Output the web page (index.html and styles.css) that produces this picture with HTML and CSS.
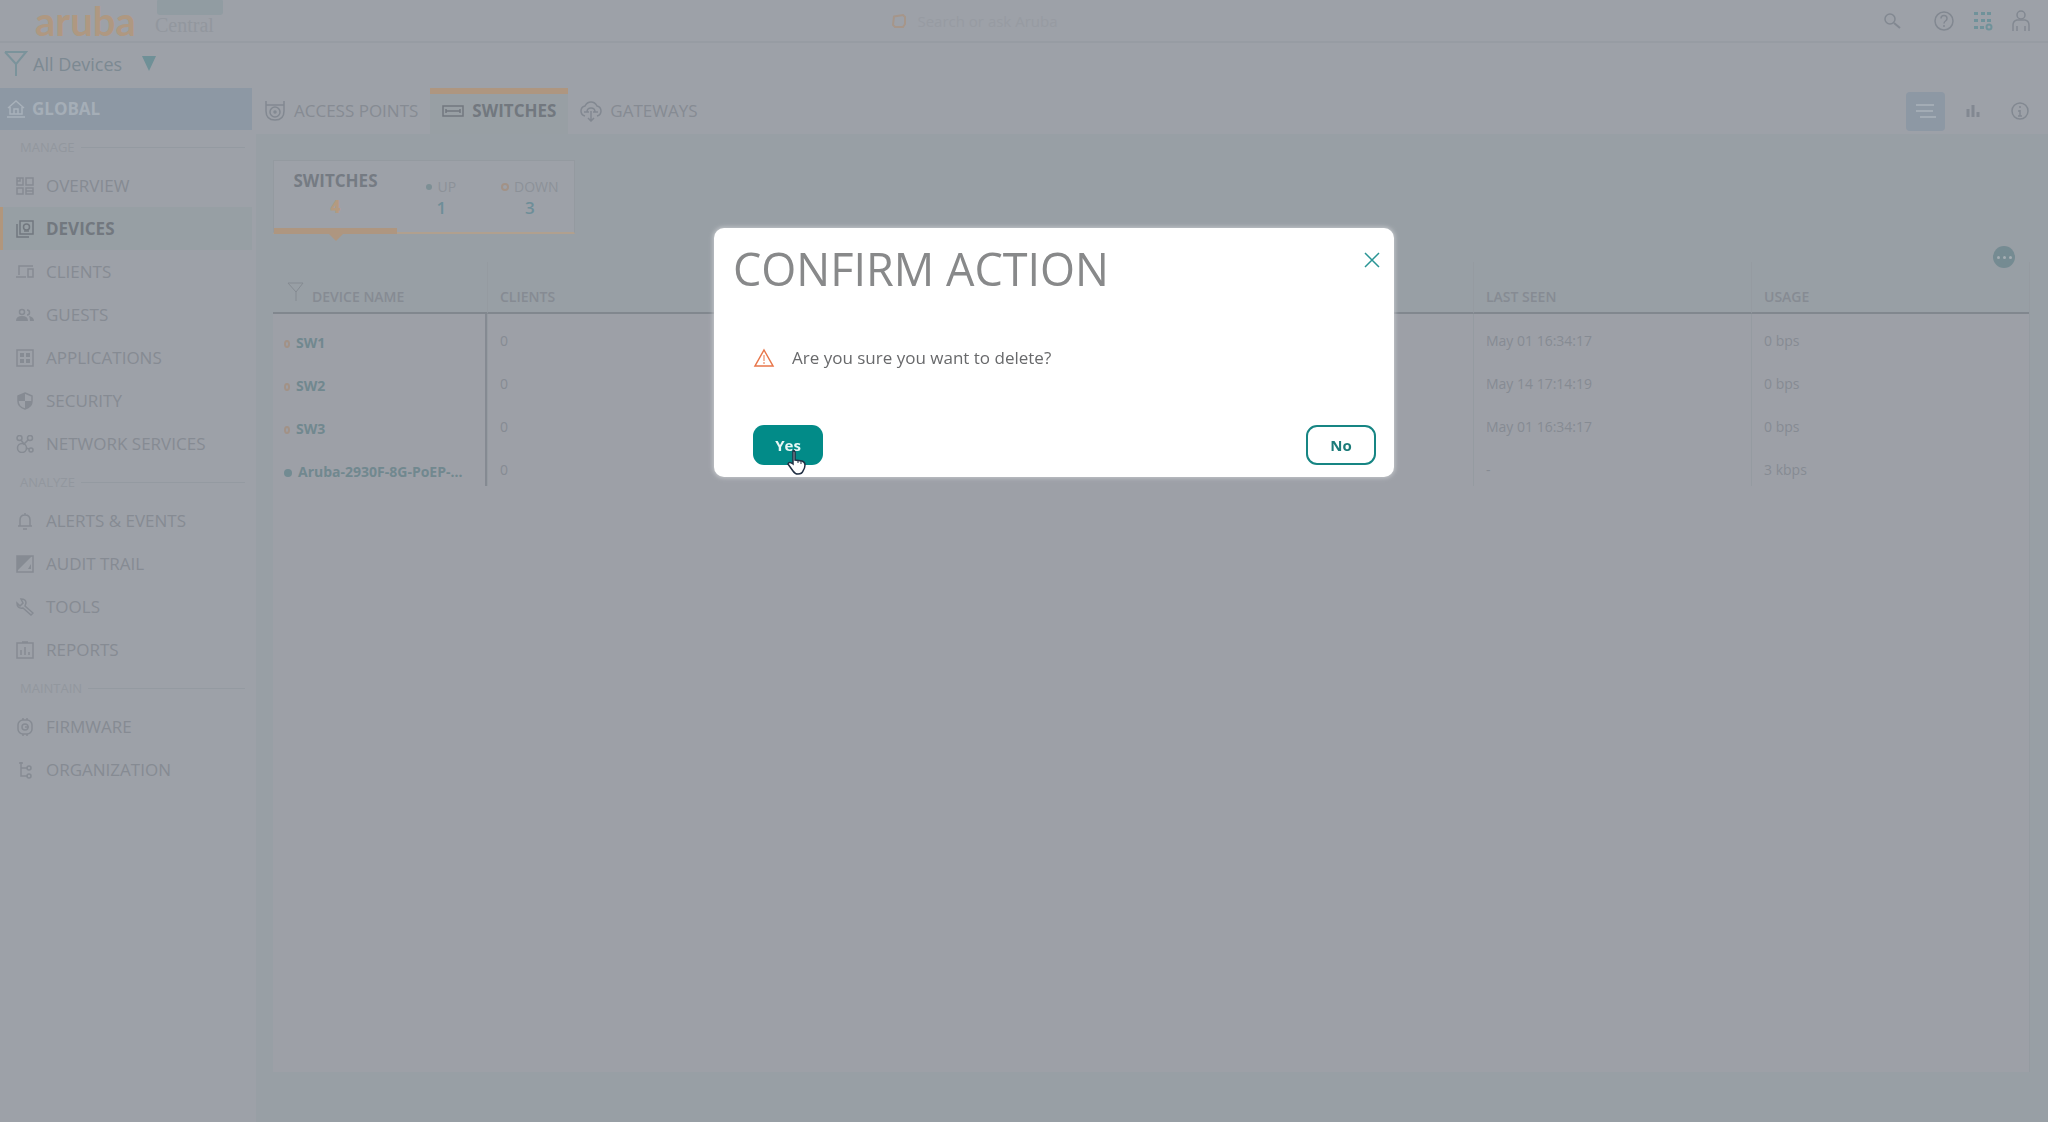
FILE: index.html
```html
<!DOCTYPE html>
<html lang="en">
<head>
<meta charset="utf-8">
<title>Aruba Central</title>
<link rel="stylesheet" href="styles.css">
</head>
<body>
<header class="topbar">
  <a class="logo" href="#">aruba</a>
  <span class="product"><i class="badge"></i>Central</span>
  <label class="search">
    <svg width="16" height="16" viewBox="0 0 16 16" aria-hidden="true"><path d="M3 3.500L12 2l2 2v7l-2 3H4l-2-2z" fill="none" stroke="#a6968a" stroke-width="2"/></svg>
    <input type="text" placeholder="Search or ask Aruba" aria-label="Search">
  </label>
  <nav class="tools">
    <button type="button" aria-label="Search"><svg width="18" height="18" viewBox="0 0 18 18"><circle cx="7" cy="7" r="5"/><path d="M11 11l6 5" stroke-width="2"/></svg></button>
    <button type="button" class="help" aria-label="Help"><svg width="22" height="22" viewBox="0 0 22 22"><circle cx="11" cy="11" r="9"/><path d="M8 8.500q0-3 3-3t3 3q0 1.500-1.500 2.500T11 13.500M11 15v2"/></svg></button>
    <button type="button" aria-label="Apps"><svg width="20" height="20" viewBox="0 0 20 20"><g fill="#70929a" stroke="none"><path d="M1 1h4v3H1zM8 1h4v3H8zM14 1h4v3h-4zM1 8h4v3H1zM8 8h4v3H8zM14 8h4v3h-4zM1 15h4v3H1zM7 15h4v3H7z"/></g><circle cx="16" cy="16" r="2.500" stroke="#70929a" stroke-width="2"/></svg></button>
    <button type="button" aria-label="Account"><svg width="20" height="22" viewBox="0 0 20 22"><circle cx="10" cy="5" r="4"/><path d="M2 21v-6q0-4 4-5h8q4 1 4 5v6M6 21v-5M14 21v-5"/></svg></button>
  </nav>
</header>

<div class="filterbar">
  <svg width="24" height="26" viewBox="0 0 24 26" aria-hidden="true"><path d="M1 1h21L12 13v12M1 1l11 12" fill="none" stroke="#7b939b" stroke-width="2"/></svg>
  <button type="button" class="scope">All Devices <i class="caret"></i></button>
</div>

<div class="shell">
  <aside class="sidebar">
    <a class="global" href="#"><svg width="18" height="20" viewBox="0 0 18 20" aria-hidden="true"><path d="M1 9l8-7 8 7M3 8v7h12V8M7 15v-5h4v5M0 18h18" fill="none" stroke="#a8b1ba" stroke-width="1.500"/></svg>GLOBAL</a>
    <h2 class="group">MANAGE</h2>
    <nav class="menu">
      <a href="#"><svg viewBox="0 0 18 18"><path d="M1 1h6v7H1zM10 1h7v7h-7zM1 11h6v6H1zM10 11h7v6h-7zM4 1v3H1M10 14h7"/></svg>OVERVIEW</a>
      <a href="#" class="on"><svg viewBox="0 0 18 18"><path d="M4 1h13v13H4zM1 4v13h12"/><circle cx="10.500" cy="7" r="3"/><path d="M8 11h5"/></svg>DEVICES</a>
      <a href="#"><svg viewBox="0 0 18 18"><path d="M17 3H3v9M0 14h10M12 6h5v8h-5z" /></svg>CLIENTS</a>
      <a href="#"><svg viewBox="0 0 18 18"><circle cx="6" cy="6" r="2.500"/><path d="M11 4a2.500 2.500 0 0 1 0 5"/><path class="solid" d="M0 15q0-5 6-5t6 5zM13 10q5 1 5 5h-4q0-3-1-5z"/></svg>GUESTS</a>
      <a href="#"><svg viewBox="0 0 18 18"><path d="M1 1h16v16H1z"/><path class="solid" d="M4 4h4v4H4zM10 4h4v4h-4zM4 10h4v4H4zM10 10h4v4h-4z"/></svg>APPLICATIONS</a>
      <a href="#"><svg viewBox="0 0 18 18"><path d="M9 1l7 3v5q0 6-7 8-7-2-7-8V4z"/><path class="solid" d="M9 1v8H2V4zM9 9h7q0 6-7 8z"/></svg>SECURITY</a>
      <a href="#"><svg viewBox="0 0 18 18"><circle cx="3.500" cy="3" r="2.500"/><circle cx="14" cy="3" r="2.500"/><circle cx="6" cy="13" r="4.500"/><circle cx="15" cy="15" r="2"/><path d="M5 5l3 4 4-4M10 13l3 1"/></svg>NETWORK SERVICES</a>
    </nav>
    <h2 class="group">ANALYZE</h2>
    <nav class="menu">
      <a href="#"><svg viewBox="0 0 18 18"><path d="M2 14h14M4 14V8q0-5 5-5t5 5v6M9 1v2M7 17h4"/></svg>ALERTS &amp; EVENTS</a>
      <a href="#"><svg viewBox="0 0 18 18"><path d="M1 1h16v16H1z"/><path class="solid" d="M1 1h15L1 16zM12 14l3-5v5z"/></svg>AUDIT TRAIL</a>
      <a href="#"><svg viewBox="0 0 18 18"><path d="M5 1q5 0 5 4l-1 3 8 7-2 2-8-7q-6 1-6-5l3 3 3-3z"/></svg>TOOLS</a>
      <a href="#"><svg viewBox="0 0 18 18"><path d="M1 2h16v15H1zM6 1h6M5 14V9M9 14V6M13 14v-3"/></svg>REPORTS</a>
    </nav>
    <h2 class="group">MAINTAIN</h2>
    <nav class="menu">
      <a href="#"><svg viewBox="0 0 18 18"><rect x="2" y="2" width="14" height="14" rx="5"/><circle cx="9" cy="9" r="3"/><path d="M7 0v2M11 0v2M7 16v2M11 16v2M9 9h4"/></svg>FIRMWARE</a>
      <a href="#"><svg viewBox="0 0 18 18"><path d="M5 1v14h7M5 7h7M3 2h4"/><circle cx="13" cy="7" r="2"/><circle cx="13" cy="15" r="2"/></svg>ORGANIZATION</a>
    </nav>
  </aside>

  <main class="main">
    <div class="tabbar">
      <nav class="tabs">
        <a href="#"><svg width="22" height="22" viewBox="0 0 22 22"><path d="M2 1v10q0 9 9 9t9-9V1M2 5h18"/><circle cx="11" cy="12" r="5"/><circle cx="11" cy="12" r="1"/></svg>ACCESS POINTS</a>
        <a href="#" class="on"><svg width="22" height="12" viewBox="0 0 22 12"><path d="M1 1h20v10H1zM4 6h14M4 4v4M18 4v4"/></svg>SWITCHES</a>
        <a href="#"><svg width="22" height="22" viewBox="0 0 22 22"><path d="M5 16q-4-1-4-5t4-5q2-4 6-4t6 4q4 1 4 5t-4 5M7 12q0-4 4-4t4 4M4 12h5M13 12h5M11 11v9M8 18l3 3 3-3"/></svg>GATEWAYS</a>
      </nav>
      <div class="views">
        <button type="button" class="on" aria-label="List"><svg width="20" height="16" viewBox="0 0 20 16"><path d="M0 2h18M0 8h17M4 14h16" stroke="#a3acb5" stroke-width="2"/></svg></button>
        <button type="button" aria-label="Summary"><svg width="14" height="12" viewBox="0 0 14 12"><path d="M2 12V4M7 12V0M12 12V7" stroke-width="3"/></svg></button>
        <button type="button" aria-label="Info"><svg width="20" height="20" viewBox="0 0 20 20"><circle cx="10" cy="10" r="8"/><path d="M10 5v2M10 9v6M8 10h2M8 15h4"/></svg></button>
      </div>
    </div>

    <div class="content">
      <section class="summary">
        <div class="total"><span>SWITCHES</span><b>4</b></div>
        <div class="stat up"><span><i class="dot"></i>UP</span><a href="#">1</a></div>
        <div class="stat"><span><i class="ring"></i>DOWN</span><a href="#">3</a></div>
      </section>
      <div class="actions"><button type="button" class="more" aria-label="More actions"><i></i><i></i><i></i></button></div>
      <div class="panel">
        <table class="grid">
          <colgroup><col class="c-name"><col><col class="c-wide"><col class="c-wide"></colgroup>
          <thead><tr>
            <th scope="col"><svg width="18" height="20" viewBox="0 0 18 20" aria-hidden="true"><path d="M1 1h15L9 10v9M1 1l8 9"/></svg>DEVICE NAME</th>
            <th scope="col">CLIENTS</th><th scope="col">LAST SEEN</th><th scope="col">USAGE</th>
          </tr></thead>
          <tbody>
            <tr><td><i class="ring"></i><a href="#">SW1</a></td><td>0</td><td>May 01 16:34:17</td><td>0 bps</td></tr>
            <tr><td><i class="ring"></i><a href="#">SW2</a></td><td>0</td><td>May 14 17:14:19</td><td>0 bps</td></tr>
            <tr><td><i class="ring"></i><a href="#">SW3</a></td><td>0</td><td>May 01 16:34:17</td><td>0 bps</td></tr>
            <tr><td><i class="dot"></i><a href="#">Aruba-2930F-8G-PoEP-...</a></td><td>0</td><td>-</td><td>3 kbps</td></tr>
          </tbody>
        </table>
      </div>
    </div>
  </main>
</div>

<div class="overlay">
  <section class="dialog" role="dialog" aria-modal="true" aria-labelledby="dlg-title">
    <div class="dialog-head">
      <h1 id="dlg-title">CONFIRM ACTION</h1>
      <button type="button" class="close" aria-label="Close"><svg width="16" height="16" viewBox="0 0 16 16"><path d="M1 1l14 14M15 1L1 15" stroke="#2a9595" stroke-width="1.500"/></svg></button>
    </div>
    <p class="message"><svg width="22" height="20" viewBox="0 0 22 20" aria-hidden="true"><path d="M11 2l9 16H2z" fill="none" stroke="#e8764a" stroke-width="1.500"/><path d="M11 7v6M11 14v2" stroke="#e8764a" stroke-width="1"/></svg>Are you sure you want to delete?</p>
    <div class="buttons">
      <button type="button" class="yes">Yes
        <svg class="pointer" width="20" height="26" viewBox="0 0 20 26" aria-hidden="true"><path d="M6 2q1-1 2 1v8l7 1q3 1 3 4 0 3-2 6-1 3-5 3-3 0-5-3l-5-7q1-3 5 0z" fill="#fff" stroke="#223044" stroke-width="1.500"/><path d="M11 11v3M14 12v3" stroke="#223044"/></svg>
      </button>
      <button type="button" class="no">No</button>
    </div>
  </section>
</div>
</body>
</html>
```
FILE: styles.css
```css
* { box-sizing: border-box; }
body {
  margin: 0;
  min-height: 100vh;
  display: flex;
  flex-direction: column;
  background: #9da1a8;
  color: #868b93;
  font: 17px/24px "Open Sans", "Noto Sans", sans-serif;
}
a { color: inherit; text-decoration: none; }
button {
  margin: 0;
  padding: 0;
  border: 0;
  background: none;
  color: inherit;
  font: inherit;
}
svg { flex: none; display: block; fill: none; }

.topbar {
  height: 43px;
  display: flex;
  align-items: center;
  padding: 0 17px 0 35px;
  border-bottom: 2px solid #979ca3;
}
.logo {
  width: 120px;
  color: #af9881;
  font: bold 40px/40px Lato, sans-serif;
}
.product {
  position: relative;
  padding-top: 8px;
  color: #92979e;
  font: 20px/24px "Liberation Serif", serif;
}
.badge {
  position: absolute;
  left: 2px;
  top: -6px;
  width: 66px;
  height: 16px;
  border-radius: 3px;
  background: #919ca2;
}
.search {
  flex: 1;
  display: flex;
  align-items: center;
  justify-content: center;
  gap: 10px;
  padding-right: 108px;
}
.search input {
  width: 180px;
  padding: 0;
  border: 0;
  background: none;
  font: 15px/20px "Open Sans", sans-serif;
}
.search input::placeholder { color: #979ba2; opacity: 1; }
.tools { display: flex; align-items: center; gap: 18px; }
.tools svg, .tabs svg, .views svg { stroke: #828891; stroke-width: 1.5; }
.tools .help { margin-left: 14px; }

.filterbar {
  height: 45px;
  display: flex;
  align-items: center;
  gap: 5px;
  padding: 0 4px 4px;
}
.scope {
  display: flex;
  align-items: center;
  gap: 20px;
  color: #7c8992;
  font-size: 18px;
  font-weight: 500;
}
.caret {
  border: 7px solid transparent;
  border-top: 15px solid #6f9097;
  border-bottom: 0;
}

.shell { flex: 1; display: flex; }
.sidebar { width: 252px; flex: none; }
.global {
  height: 42px;
  display: flex;
  align-items: center;
  gap: 7px;
  padding-left: 7px;
  background: #8d98a4;
  color: #a5aeb7;
  font-weight: bold;
}
.group {
  height: 34px;
  display: flex;
  align-items: center;
  gap: 6px;
  margin: 0;
  padding: 0 7px 0 20px;
  color: #92979e;
  font-size: 13px;
  font-weight: normal;
}
.group::after { content: ""; flex: 1; border-top: 1px solid #949aa1; }
.menu a {
  height: 43px;
  display: flex;
  align-items: center;
  gap: 12px;
  padding: 0 0 0 13px;
  border-left: 3px solid transparent;
}
.menu svg { width: 18px; height: 18px; stroke: currentColor; stroke-width: 1.5; }
.menu .solid { fill: currentColor; stroke: none; }
.menu .on {
  background: #979fa4;
  border-color: #b1967c;
  color: #72787f;
  font-weight: bold;
}

.main { flex: 1; display: flex; flex-direction: column; min-width: 0; }
.tabbar { height: 46px; display: flex; justify-content: space-between; }
.tabs { display: flex; }
.tabs a {
  display: flex;
  align-items: center;
  gap: 8px;
  padding: 0 12px 6px;
  border-top: 6px solid transparent;
}
.tabs .on {
  border-color: #ae9680;
  background: #989fa4;
  color: #72787f;
  font-weight: bold;
}
.tabs .on svg { stroke: #72787f; }
.views { display: flex; align-items: center; gap: 8px; padding-right: 9px; }
.views button {
  width: 39px;
  height: 39px;
  display: grid;
  place-items: center;
  border-radius: 4px;
}
.views .on { background: #8d98a4; }

.content {
  flex: 1;
  display: flex;
  flex-direction: column;
  padding: 26px 18px 50px 17px;
  margin-left: 4px;
  background: #989fa5;
}
.summary {
  width: 302px;
  height: 74px;
  display: flex;
  background: #9da1a8;
  border: 1px solid #949aa0;
  border-bottom: 2px solid #b0a08f;
}
.summary div { display: flex; flex-direction: column; align-items: center; }
.summary .total {
  position: relative;
  width: 123px;
  height: 73px;
  padding-top: 7px;
  line-height: 26px;
  border-bottom: 6px solid #ae9680;
  color: #757b83;
  font-weight: bold;
}
.total b { color: #b49a80; }
.total::after {
  content: "";
  position: absolute;
  top: 72px;
  border: 8px solid transparent;
  border-top-color: #ae9680;
  border-bottom: 0;
}
.summary .stat { flex: 1; padding-top: 16px; color: #8c9198; font-size: 14px; line-height: 20px; }
.stat span { display: flex; align-items: center; gap: 5px; }
.stat a { color: #6e8e98; font-size: 17px; font-weight: 600; line-height: 22px; }
.dot, .ring { flex: none; display: inline-block; border-radius: 50%; }
.dot { width: 6px; height: 6px; background: #7d8f95; }
.ring { width: 8px; height: 8px; border: 2px solid #a29287; }

.actions { height: 16px; display: flex; justify-content: flex-end; padding-right: 15px; margin-top: 12px; }
.more {
  position: relative;
  width: 22px;
  height: 22px;
  flex: none;
  display: flex;
  align-items: center;
  justify-content: center;
  gap: 3px;
  border-radius: 50%;
  background: #758b92;
}
.more i { width: 3px; height: 3px; border-radius: 50%; background: #a5adb3; }

.panel {
  flex: 1;
  background: linear-gradient(#989fa5 52px, #9da0a7 52px);
  border-right: 1px solid #959ba1;
}
.grid { width: 100%; border-collapse: separate; border-spacing: 0; table-layout: fixed; font-size: 14px; }
.c-name { width: 214px; }
.c-wide { width: 278px; }
.grid th {
  height: 52px;
  padding: 0 12px 3px;
  border-bottom: 2px solid #81878e;
  vertical-align: bottom;
  text-align: left;
  font-weight: 600;
}
.grid th:first-child { padding-left: 14px; }
.grid th svg { display: inline-block; margin-right: 7px; stroke: #858b92; stroke-width: 1; }
.grid th + th, .grid td + td { border-left: 1px solid #959ba1; }
.grid td { height: 43px; padding: 15px 12px 4px; }
.grid td:first-child { padding: 17px 0 2px 11px; border-right: 2px solid #858a92; }
.grid td a { margin-left: 6px; color: #71888f; font-weight: bold; }
.grid td .ring { width: 6px; height: 8px; }
.grid td .dot { width: 8px; height: 8px; background: #728b92; }

.overlay {
  position: fixed;
  inset: 0;
  display: flex;
  justify-content: center;
  align-items: flex-start;
  padding: 228px 0 0 60px;
}
.dialog {
  width: 680px;
  padding: 18px 18px 12px 19px;
  border-radius: 10px;
  background: #fff;
  box-shadow: 0 0 4px 1px #c4c7cb;
  color: #68696b;
}
.dialog-head {
  display: flex;
  justify-content: space-between;
  align-items: flex-start;
  margin-right: -8px;
}
.dialog h1 { margin: 0; color: #88898a; font-size: 45px; line-height: 46px; font-weight: normal; }
.close { width: 24px; height: 28px; display: grid; place-items: center; }
.message {
  display: flex;
  align-items: center;
  gap: 17px;
  margin: 54px 0 55px 20px;
}
.buttons { display: flex; justify-content: space-between; padding-left: 20px; }
.yes, .no { height: 40px; width: 70px; border-radius: 11px; font-size: 15px; font-weight: bold; }
.yes { position: relative; background: #028b88; color: #e8f7f5; }
.no { border: 2px solid #168583; color: #1c7b79; }
.pointer { position: absolute; left: 34px; top: 24px; }
```
